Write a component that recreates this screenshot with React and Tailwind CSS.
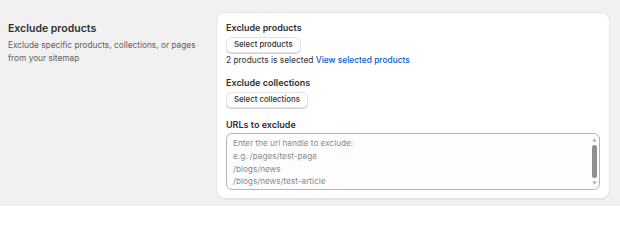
const font = { fontFamily: 'Inter, "Noto Sans", sans-serif' };

function SmallButton({ children }) {
  return (
    <button
      type="button"
      className="flex h-[16px] items-center rounded-[5px] border border-[#e3e3e3] bg-white px-[7px] text-[7.8px] font-medium leading-none text-[#303030] shadow-[0_1px_0_#d4d4d4]"
    >
      {children}
    </button>
  );
}

function Scrollbar() {
  return (
    <div className="pointer-events-none absolute top-[3px] right-[2px] bottom-[3px] flex w-[7px] flex-col items-center">
      <svg width="5" height="4" viewBox="0 0 5 4" className="mt-[2px]">
        <path d="M2.5 0.5 L4.5 3.5 L0.5 3.5 Z" fill="#a3a3a3" />
      </svg>
      <div className="my-[3px] w-[5px] flex-1 rounded-full bg-[#8e8e8e]" />
      <svg width="5" height="4" viewBox="0 0 5 4" className="mb-[2px]">
        <path d="M0.5 0.5 L4.5 0.5 L2.5 3.5 Z" fill="#a3a3a3" />
      </svg>
    </div>
  );
}

export default function App() {
  return (
    <div className="flex h-[206px] w-[620px] bg-[#f1f1f1] pt-[12px] pl-[8px] pr-[10px]" style={font}>
      <div className="w-[208px] shrink-0 pt-[10px]">
        <h2 className="text-[10.5px] leading-[13px] font-semibold text-[#303030]">Exclude products</h2>
        <p className="mt-[4px] pr-[10px] text-[8.3px] leading-[13px] text-[#616161]">
          Exclude specific products, collections, or pages from your sitemap
        </p>
      </div>
      <div className="flex h-[187px] flex-1 flex-col items-start rounded-[9px] border border-[#e6e6e6] bg-white px-[9px] pt-[9px] shadow-[0_1px_0_rgba(0,0,0,0.06)]">
        <h3 className="text-[9px] leading-[12px] font-semibold text-[#303030]">Exclude products</h3>
        <div className="mt-[3px] flex">
          <SmallButton>Select products</SmallButton>
        </div>
        <p className="mt-[1px] text-[8.4px] leading-[13px] text-[#303030]">
          2 products is selected <span className="font-medium text-[#005bd3]">View selected products</span>
        </p>
        <h3 className="mt-[10px] text-[9px] leading-[12px] font-semibold text-[#303030]">Exclude collections</h3>
        <div className="mt-[3px] flex">
          <SmallButton>Select collections</SmallButton>
        </div>
        <h3 className="mt-[11px] text-[9px] leading-[12px] font-semibold text-[#303030]">URLs to exclude</h3>
        <div className="relative mt-[2px] w-full">
          <div className="h-[57px] overflow-hidden rounded-[6px] border border-[#b5b5b5] bg-[#fdfdfd] px-[6px] pt-[3px] pr-[14px] text-[8.2px] leading-[12.8px] text-[#8a8a8a]">
            <div>Enter the url handle to exclude:</div>
            <div>e.g. /pages/test-page</div>
            <div>/blogs/news</div>
            <div>/blogs/news/test-article</div>
          </div>
          <Scrollbar />
        </div>
      </div>
    </div>
  );
}
